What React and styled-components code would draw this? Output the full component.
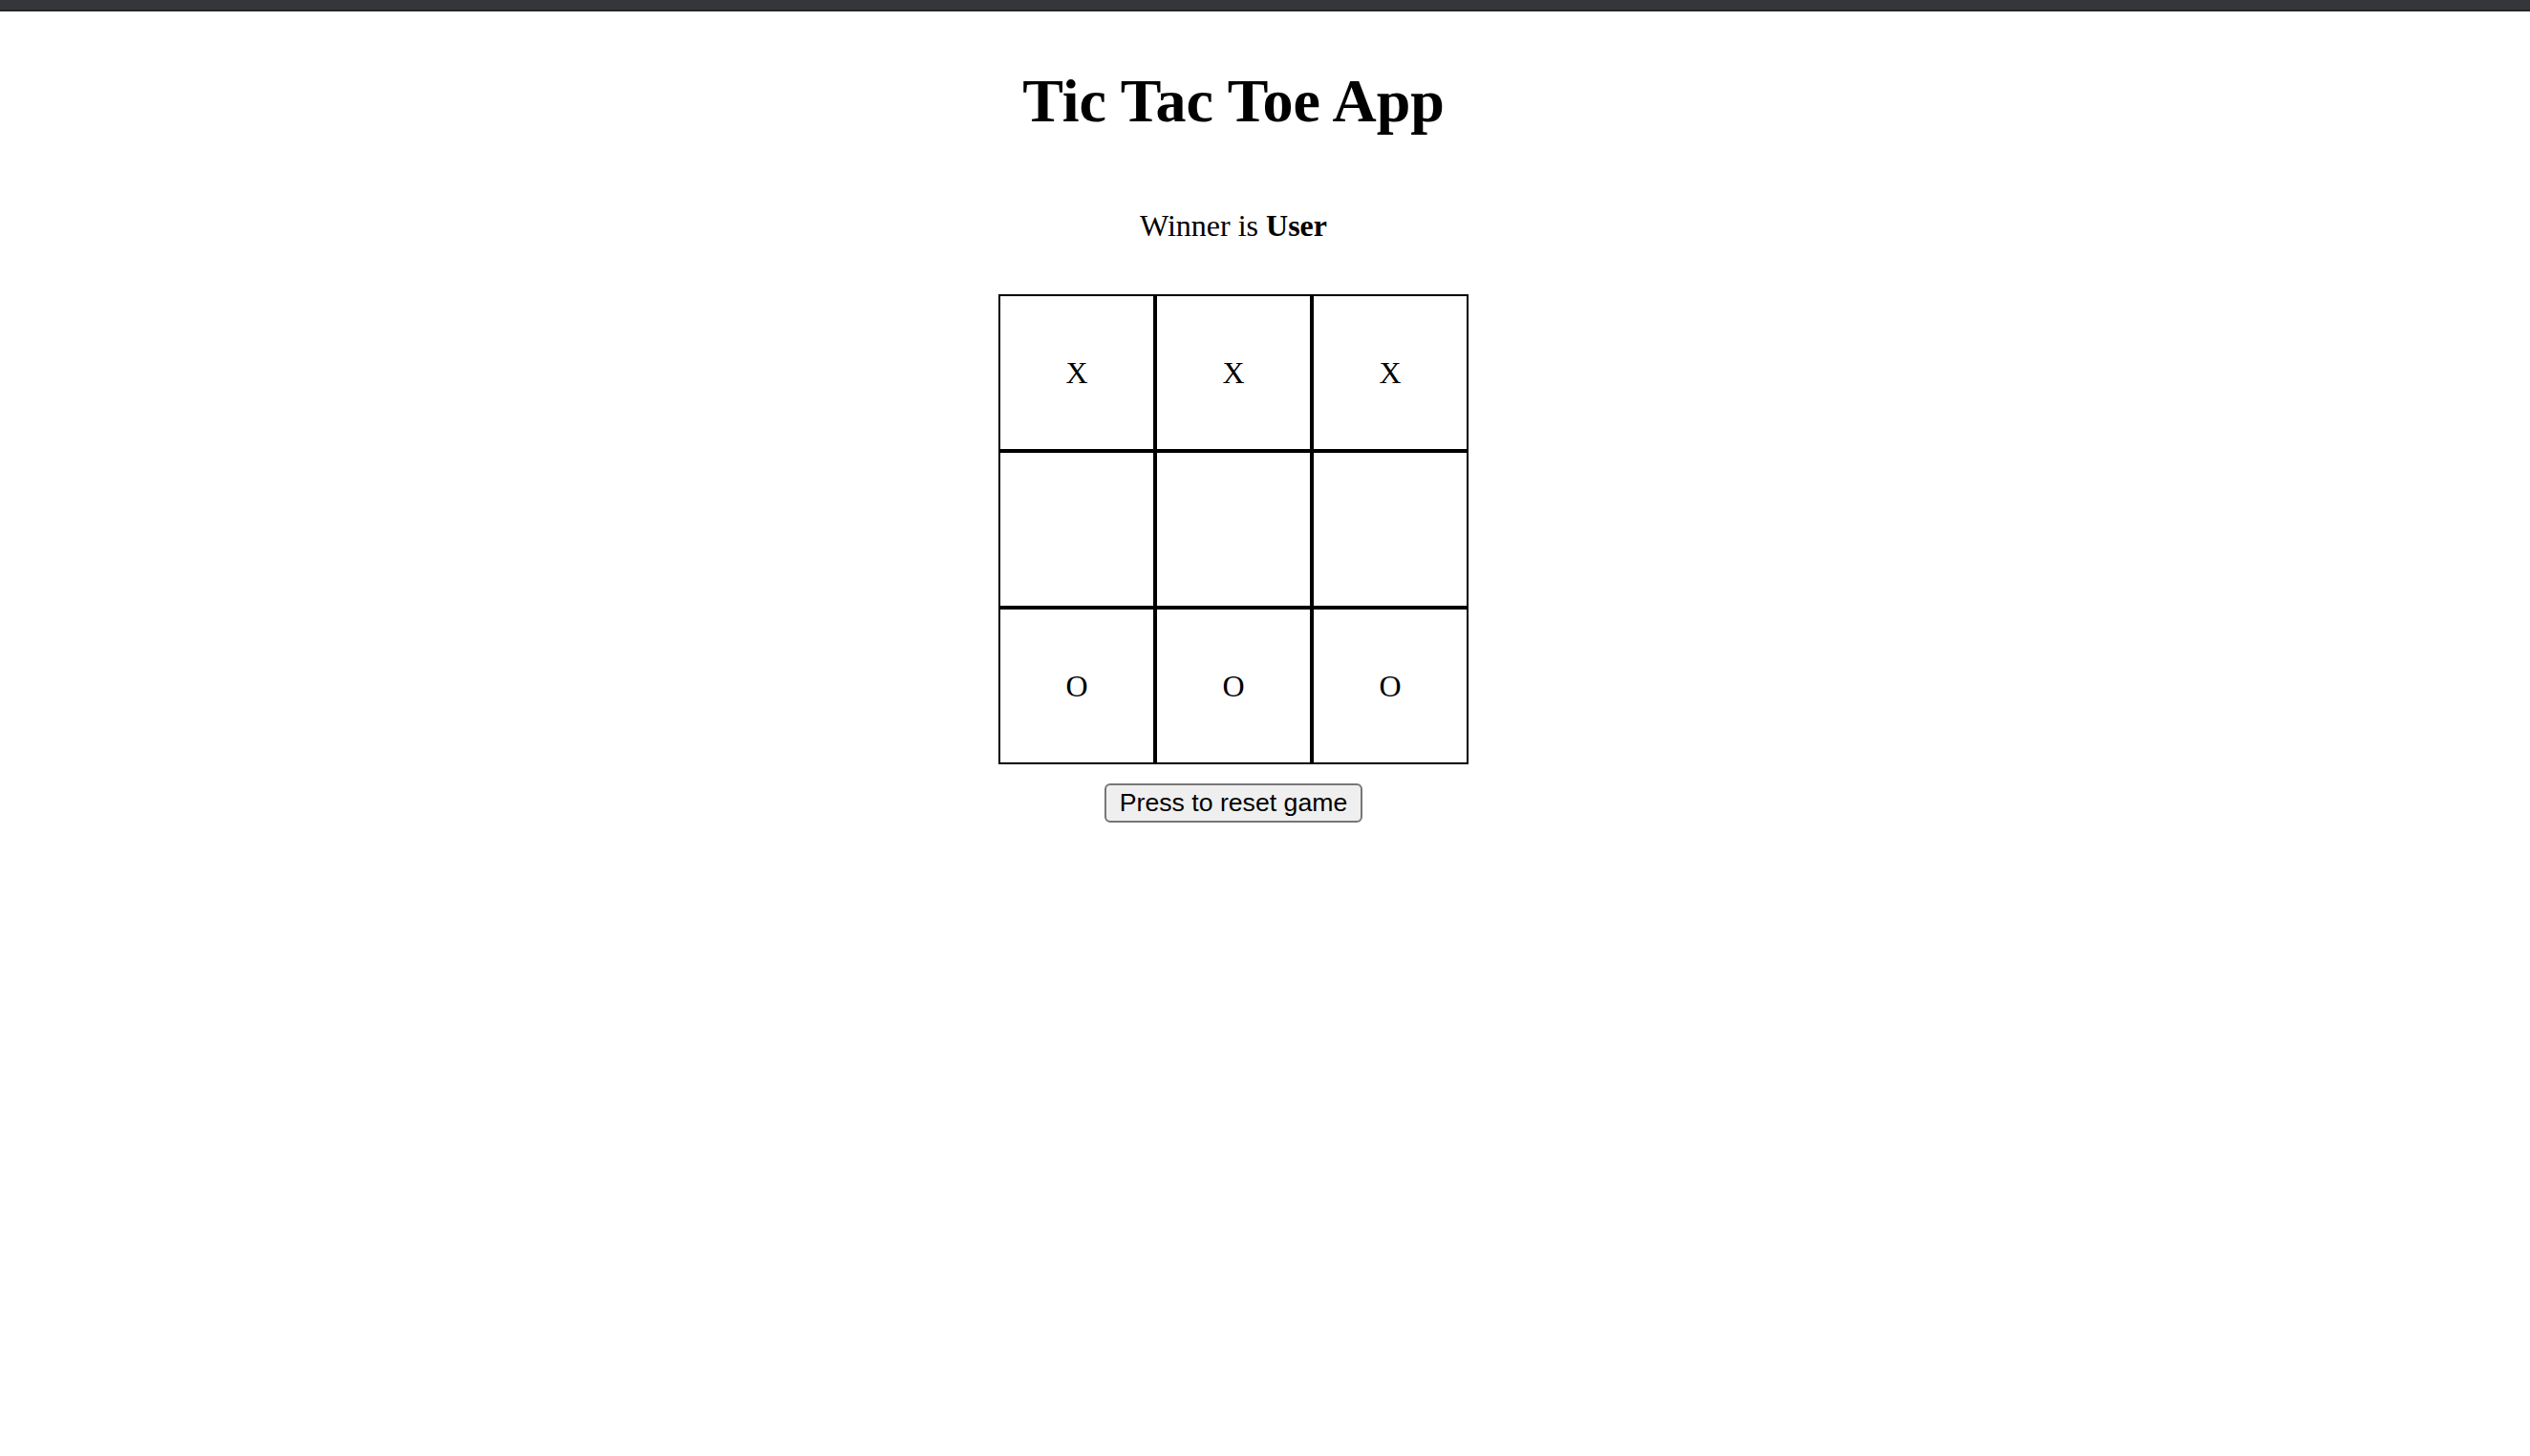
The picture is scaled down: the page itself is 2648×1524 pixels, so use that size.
import React, { useState } from 'react';
import styled, { createGlobalStyle } from 'styled-components';

const GlobalStyle = createGlobalStyle`
  html, body {
    margin: 0;
    padding: 0;
    background: #ffffff;
  }
  body {
    font-family: "Liberation Serif", "Times New Roman", serif;
    color: #000000;
  }
`;

const TopBar = styled.div`
  height: 10px;
  background: #35363a;
  border-bottom: 2px solid #26262a;
`;

const Page = styled.div`
  display: flex;
  flex-direction: column;
  align-items: center;
  padding-right: 66px;
`;

const Title = styled.h1`
  margin: 57px 0 0;
  font-size: 64px;
  font-weight: bold;
  line-height: normal;
`;

const Status = styled.p`
  margin: 75px 0 0;
  font-size: 32px;
  line-height: normal;

  strong {
    font-weight: bold;
  }
`;

const Board = styled.div`
  display: grid;
  grid-template-columns: repeat(3, 164px);
  margin-top: 53px;
`;

const Cell = styled.div`
  width: 160px;
  height: 160px;
  border: 2px solid #000000;
  display: flex;
  align-items: center;
  justify-content: center;
  font-size: 32px;
  cursor: pointer;
`;

const ResetButton = styled.button`
  margin-top: 20px;
  padding: 3px 14px;
  font-family: "Liberation Sans", Arial, sans-serif;
  font-size: 26.67px;
  color: #000000;
  background: #efefef;
  border: 2px solid #767676;
  border-radius: 6px;
  cursor: pointer;
`;

const start = ['X', 'X', 'X', '', '', '', 'O', 'O', 'O'];

function App() {
  const [cells, setCells] = useState(start);

  const handleReset = () => {
    setCells(Array(9).fill(''));
  };

  return (
    <>
      <GlobalStyle />
      <TopBar />
      <Page>
        <Title>Tic Tac Toe App</Title>
        <Status>
          Winner is <strong>User</strong>
        </Status>
        <Board>
          {cells.map((value, index) => (
            <Cell key={index}>{value}</Cell>
          ))}
        </Board>
        <ResetButton onClick={handleReset}>Press to reset game</ResetButton>
      </Page>
    </>
  );
}

export default App;
